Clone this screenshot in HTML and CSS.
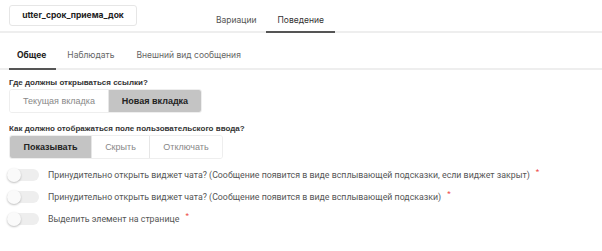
FILE: index.html
```html
<!DOCTYPE html>
<html lang="ru">
<head>
    <meta charset="UTF-8">
    <title>Поведение</title>
    <link rel="stylesheet" href="styles.css">
</head>
<body>
    <div class="header">
        <div class="name-box">utter_срок_приема_док</div>
        <div class="main-tabs">
            <span class="tab">Вариации</span>
            <span class="tab active">Поведение</span>
        </div>
    </div>

    <div class="sub-tabs">
        <span class="sub-tab active">Общее</span>
        <span class="sub-tab">Наблюдать</span>
        <span class="sub-tab">Внешний вид сообщения</span>
    </div>

    <div class="content">
        <div class="field">
            <div class="field-label">Где должны открываться ссылки?</div>
            <div class="btn-group">
                <button class="seg seg-wide">Текущая вкладка</button>
                <button class="seg seg-mid selected">Новая вкладка</button>
            </div>
        </div>

        <div class="field">
            <div class="field-label">Как должно отображаться поле пользовательского ввода?</div>
            <div class="btn-group">
                <button class="seg seg-show selected">Показывать</button>
                <button class="seg seg-hide">Скрыть</button>
                <button class="seg seg-off">Отключать</button>
            </div>
        </div>

        <div class="toggles">
            <label class="toggle-row">
                <span class="switch"><span class="knob"></span></span>
                <span class="toggle-text">Принудительно открыть виджет чата? (Сообщение появится в виде всплывающей подсказки, если виджет закрыт)</span>
                <span class="req">*</span>
            </label>
            <label class="toggle-row">
                <span class="switch"><span class="knob"></span></span>
                <span class="toggle-text">Принудительно открыть виджет чата? (Сообщение появится в виде всплывающей подсказки)</span>
                <span class="req">*</span>
            </label>
            <label class="toggle-row">
                <span class="switch"><span class="knob"></span></span>
                <span class="toggle-text">Выделить элемент на странице</span>
                <span class="req">*</span>
            </label>
        </div>
    </div>
</body>
</html>
```

FILE: styles.css
```css
* {
    margin: 0;
    padding: 0;
    box-sizing: border-box;
}

body {
    font-family: Roboto, "Liberation Sans", sans-serif;
    background: #fff;
    color: #444;
    width: 602px;
    height: 251px;
    overflow: hidden;
}

.header {
    display: flex;
    align-items: flex-end;
    height: 33px;
    border-bottom: 2px solid #eee;
}

.name-box {
    align-self: flex-start;
    margin: 5px 0 0 9px;
    width: 128px;
    height: 21px;
    border: 1px solid #e6e6e6;
    border-radius: 3px;
    font-family: Inter, sans-serif;
    font-weight: 700;
    font-size: 8.5px;
    color: #222;
    line-height: 19px;
    text-align: center;
}

.main-tabs {
    display: flex;
    margin-left: 69px;
    margin-bottom: -2px;
}

.tab {
    font-family: Inter, sans-serif;
    font-size: 8.5px;
    color: #555;
    padding: 0 10px 6px;
    border-bottom: 2px solid transparent;
}

.tab.active {
    color: #333;
    padding: 0 11px 6px;
    border-bottom-color: #555;
}

.sub-tabs {
    display: flex;
    padding: 17px 0 0 9px;
    border-bottom: 2px solid #eee;
}

.sub-tab {
    font-family: Inter, sans-serif;
    font-size: 8.5px;
    color: #666;
    padding: 0 11px 8px;
    margin-bottom: -2px;
    border-bottom: 2px solid transparent;
}

.sub-tab.active {
    font-weight: 700;
    color: #222;
    padding: 0 10px 8px 8px;
    border-bottom-color: #555;
}

.content {
    padding: 8px 0 0 9px;
}

.field {
    margin-bottom: 11px;
}

.field:nth-child(2) {
    margin-bottom: 8px;
}

.field-label {
    font-family: "Liberation Sans", Arial, sans-serif;
    font-weight: 700;
    font-size: 8px;
    color: #333;
    margin-bottom: 2px;
}

.btn-group {
    display: inline-flex;
    border: 1px solid #eee;
    border-radius: 3px;
    overflow: hidden;
}

.seg {
    height: 22px;
    border: none;
    border-left: 1px solid #e6e6e6;
    background: #fff;
    font-family: "Liberation Sans", Arial, sans-serif;
    font-size: 9px;
    color: #888;
}

.seg:first-child {
    border-left: none;
}

.seg.selected {
    background: #c4c4c4;
    color: #222;
    font-weight: 700;
}

.seg-wide { width: 98px; }
.seg-mid { width: 93px; }
.seg-show { width: 81px; }
.seg-hide { width: 58px; }
.seg-off { width: 73px; }

.toggles {
    display: flex;
    flex-direction: column;
    gap: 6px;
}

.toggle-row {
    display: flex;
    align-items: center;
    height: 16px;
    margin-left: -2px;
}

.switch {
    position: relative;
    width: 32px;
    height: 12px;
    border-radius: 6px;
    background: #eee;
    flex-shrink: 0;
}

.knob {
    position: absolute;
    left: 0;
    top: -1px;
    width: 14px;
    height: 14px;
    border-radius: 50%;
    background: #fafafa;
    box-shadow: 0 1px 2px rgba(0,0,0,0.25);
}

.toggle-text {
    margin-left: 9px;
    font-size: 8.8px;
    color: #555;
}

.req {
    align-self: flex-start;
    margin-left: 6px;
    font-size: 8px;
    color: #e44;
}
```
